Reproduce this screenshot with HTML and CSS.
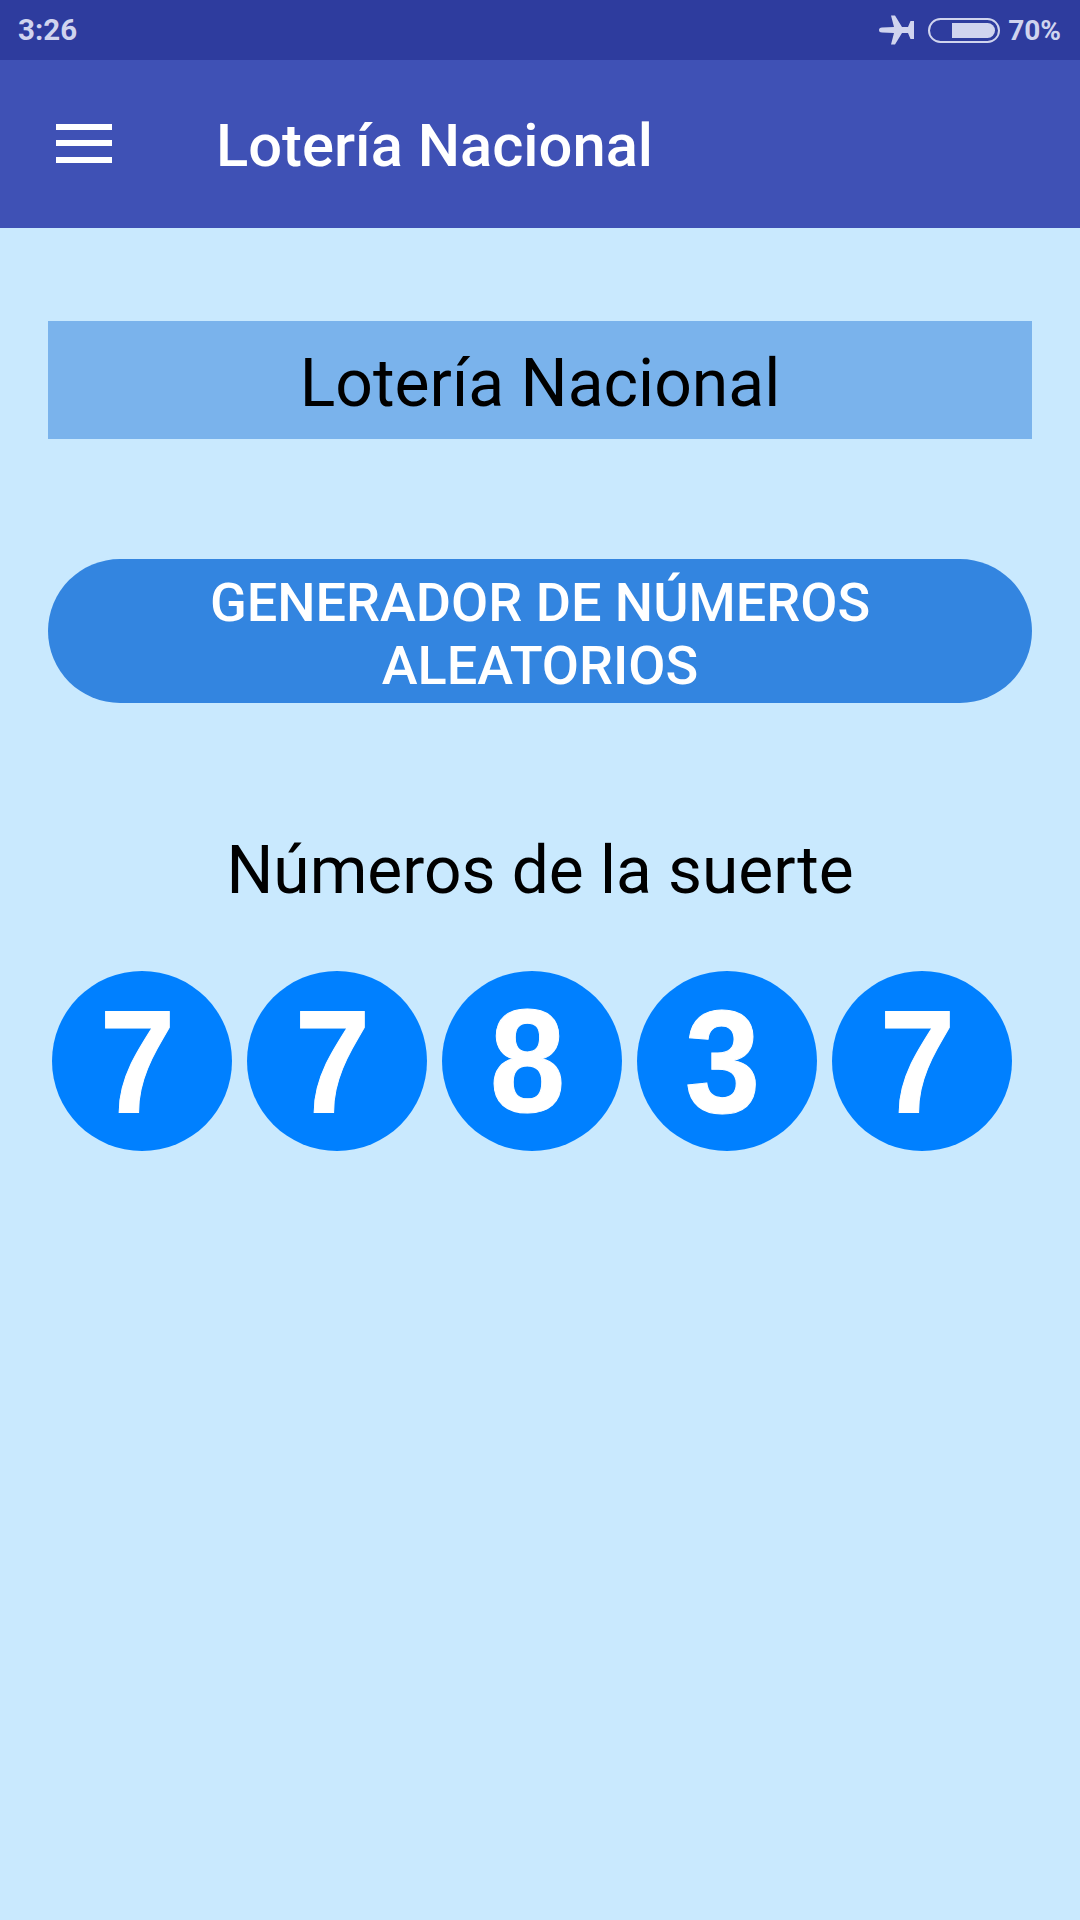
FILE: index.html
```html
<!doctype html>
<html>
<head>
	<title>Lotería Nacional</title>
	<meta charset="utf-8">
	<link rel="stylesheet" href="styles.css">
</head>
<body>
	<div class="status_bar">
		<span class="status_time">3:26</span>
		<div class="status_right">
			<svg class="plane" width="36" height="30" viewBox="0 0 36 30">
				<path d="M0 15 Q0 12.5 3 12.5 L15 12 L12 0.5 L16 0.5 L23 12 L29 12 L31.5 6 L35 6 L35 24 L31.5 24 L29 18 L23 18 L16 29.5 L12 29.5 L15 18 L3 17.5 Q0 17.5 0 15 Z" fill="#d0d4ee"/>
			</svg>
			<div class="battery"><div class="battery_fill"></div></div>
			<span class="status_pct">70%</span>
		</div>
	</div>

	<div class="app_bar">
		<div class="menu_icon">
			<span></span>
			<span></span>
			<span></span>
		</div>
		<div class="app_title">Lotería Nacional</div>
	</div>

	<div class="main">
		<div class="banner">Lotería Nacional</div>
		<div class="btn_generate">GENERADOR DE NÚMEROS<br>ALEATORIOS</div>
		<div class="lucky_title">Números de la suerte</div>
		<div class="balls">
			<div class="ball"><span>7</span></div>
			<div class="ball"><span>7</span></div>
			<div class="ball"><span>8</span></div>
			<div class="ball"><span>3</span></div>
			<div class="ball"><span>7</span></div>
		</div>
	</div>
</body>
</html>
```

FILE: styles.css
```css
body{
	margin: 0;
	padding: 0;
	height: 1920px;
	overflow: hidden;
	font-family: Roboto, "Liberation Sans", sans-serif;
	background: #c9e9fe;
}
.status_bar{
	height: 60px;
	background: #2e3c9e;
	color: #d0d4ee;
	display: flex;
	align-items: center;
	justify-content: space-between;
	padding: 0 19px 0 18px;
	font-size: 28px;
	font-weight: 700;
}
.status_time{
	font-size: 29.5px;
}
.status_right{
	display: flex;
	align-items: center;
}
.plane{
	margin-right: 13px;
}
.battery{
	width: 72px;
	height: 25px;
	box-sizing: border-box;
	border: 2px solid #d0d4ee;
	border-radius: 13px;
	padding: 3px;
	margin-right: 8px;
	display: flex;
	justify-content: flex-end;
}
.battery_fill{
	width: 70%;
	background: #d0d4ee;
	border-radius: 0 8px 8px 0;
}
.app_bar{
	height: 168px;
	background: #3f51b5;
	display: flex;
	align-items: center;
	padding-left: 56px;
}
.menu_icon{
	width: 56px;
	height: 39px;
	display: flex;
	flex-direction: column;
	justify-content: space-between;
	margin-right: 104px;
	margin-top: -2px;
}
.menu_icon span{
	height: 6px;
	background: #fff;
}
.app_title{
	color: #fff;
	font-size: 59.7px;
	font-weight: 500;
	padding-top: 3px;
}
.main{
	padding: 93px 48px 0 48px;
}
.banner{
	height: 118px;
	line-height: 125px;
	background: #7ab3ec;
	text-align: center;
	font-size: 66px;
	color: #000;
}
.btn_generate{
	margin-top: 120px;
	height: 144px;
	box-sizing: border-box;
	border-radius: 72px;
	background: #3385e0;
	color: #fff;
	text-align: center;
	font-size: 54px;
	font-weight: 500;
	line-height: 63px;
	padding-top: 12px;
}
.lucky_title{
	margin-top: 130px;
	text-align: center;
	font-size: 65.8px;
	line-height: 76px;
	color: #000;
}
.balls{
	margin-top: 62px;
	padding-left: 4px;
	display: flex;
	gap: 15px;
}
.ball{
	width: 180px;
	height: 180px;
	box-sizing: border-box;
	padding-right: 8px;
	border-radius: 50%;
	background: #0080ff;
	color: #fff;
	font-family: "Liberation Sans", Arial, sans-serif;
	font-weight: 700;
	font-size: 146px;
	line-height: 182px;
	text-align: center;
}
.ball span{
	display: inline-block;
	transform: scaleX(.93);
	-webkit-text-stroke: 1px #fff;
}
```
